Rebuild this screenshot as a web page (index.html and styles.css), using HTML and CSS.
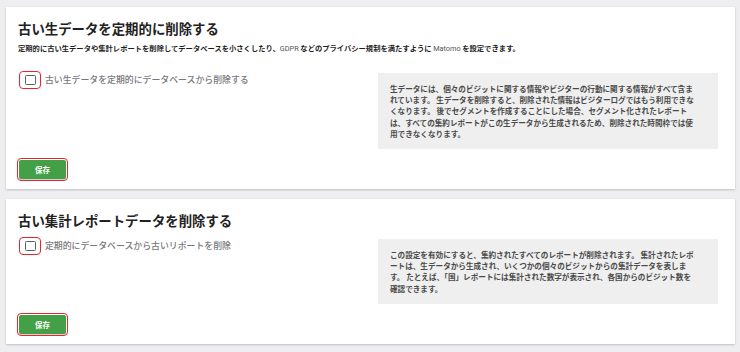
FILE: index.html
```html
<!DOCTYPE html>
<html lang="ja">
<head>
<meta charset="utf-8">
<link rel="stylesheet" href="styles.css">
</head>
<body>
<section class="card">
  <h2 class="card-title">古い生データを定期的に削除する</h2>
  <p class="card-desc">定期的に古い生データや集計レポートを削除してデータベースを小さくしたり、<span class="latin">GDPR</span> などのプライバシー規制を満たすように <span class="latin">Matomo</span> を設定できます。</p>
  <div class="row">
    <label class="field">
      <span class="check"><span class="box"></span></span>
      <span class="field-label">古い生データを定期的にデータベースから削除する</span>
    </label>
    <div class="help">生データには、個々のビジットに関する情報やビジターの行動に関する情報がすべて含ま<br>れています。 生データを削除すると、削除された情報はビジターログではもう利用できな<br>くなります。 後でセグメントを作成することにした場合、セグメント化されたレポート<br>は、すべての集約レポートがこの生データから生成されるため、削除された時間枠では使<br>用できなくなります。</div>
  </div>
  <button class="btn">保存</button>
</section>
<section class="card">
  <h2 class="card-title">古い集計レポートデータを削除する</h2>
  <div class="row">
    <label class="field">
      <span class="check"><span class="box"></span></span>
      <span class="field-label">定期的にデータベースから古いリポートを削除</span>
    </label>
    <div class="help">この設定を有効にすると、集約されたすべてのレポートが削除されます。 集計されたレポ<br>ートは、生データから生成され、いくつかの個々のビジットからの集計データを表しま<br>す。 たとえば、「国」レポートには集計された数字が表示され、各国からのビジット数を<br>確認できます。</div>
  </div>
  <button class="btn">保存</button>
</section>
</body>
</html>
```

FILE: styles.css
```css
html { background: #eeeef0; }
body {
  margin: 0;
  padding: 7px 5px 0 6px;
  font-family: "Noto Sans CJK JP", "Noto Sans", sans-serif;
  color: #212121;
}
.card {
  background: #fff;
  box-shadow: 0 1px 2px rgba(0,0,0,0.18), 0 0 1px rgba(0,0,0,0.08);
  padding: 12px 17px 10px 12px;
  margin-bottom: 10px;
  display: flex;
  flex-direction: column;
  align-items: flex-start;
}
.card-title {
  margin: 0;
  font-size: 13.4px;
  line-height: 18px;
  font-weight: 600;
  color: #222;
}
.card-desc {
  margin: 6px 0 9px;
  font-size: 7.3px;
  line-height: 10px;
  font-weight: 700;
  color: #1e1e1e;
  white-space: nowrap;
}
.card-desc .latin {
  font-family: "Roboto", "Noto Sans", sans-serif;
  font-weight: 400;
  color: #555;
}
.row {
  margin-top: 8px;
  display: grid;
  grid-template-columns: 1fr 340px;
  align-items: start;
  width: 100%;
}
.field {
  display: flex;
  align-items: center;
}
.check {
  margin-left: 1px;
  width: 22px;
  height: 18px;
  box-sizing: border-box;
  border: 1.5px solid #e5262c;
  border-radius: 4px;
  display: flex;
  align-items: center;
  justify-content: center;
}
.box {
  width: 11px;
  height: 10px;
  box-sizing: border-box;
  border: 1.5px solid #5f5f5f;
  border-radius: 1.5px;
}
.field-label {
  margin-left: 4px;
  font-size: 8.9px;
  line-height: 18px;
  font-weight: 500;
  color: #77777c;
  white-space: nowrap;
}
.help {
  margin-top: 2px;
  background: #efefef;
  padding: 10px 12px;
  font-size: 7.6px;
  line-height: 11.2px;
  font-weight: 700;
  color: #4a4a4a;
  white-space: nowrap;
}
.btn {
  margin: 11px 0 0 1px;
  width: 47px;
  height: 19px;
  background: #43a047;
  color: #fff;
  border: 0;
  border-radius: 2px;
  outline: 1.5px solid #e5262c;
  outline-offset: 1px;
  font-family: inherit;
  font-size: 7.5px;
  font-weight: 700;
  padding: 0;
  box-shadow: 0 1px 1px rgba(0,0,0,0.2);
}
```
